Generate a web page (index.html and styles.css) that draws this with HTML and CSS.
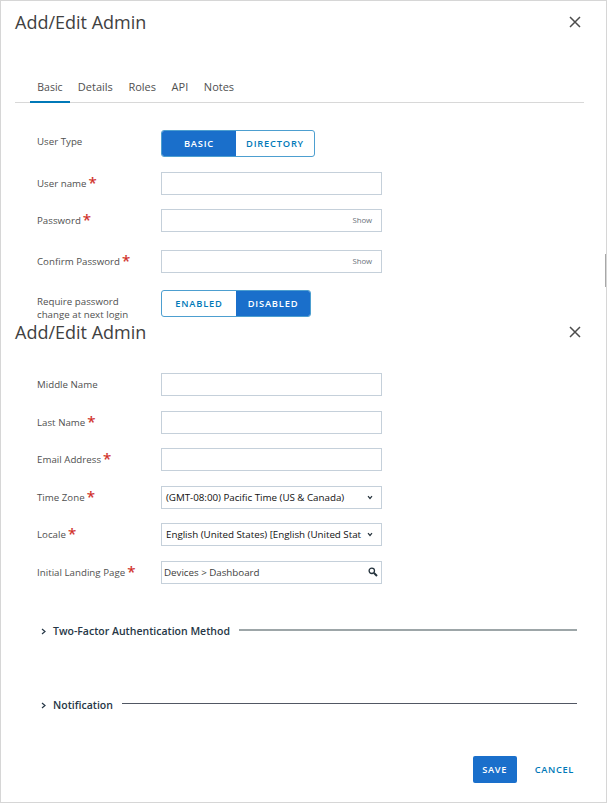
FILE: index.html
```html
<!DOCTYPE html>
<html lang="en">
<head>
<meta charset="utf-8">
<title>Add/Edit Admin</title>
<link rel="stylesheet" href="styles.css">
</head>
<body>
<main class="dialog">
  <section class="panel panel-top">
    <header class="head">
      <h1 class="title">Add/Edit Admin</h1>
      <svg class="close" viewBox="0 0 12 12"><path d="M1 1L11 11M11 1L1 11"/></svg>
    </header>
    <nav class="tabs">
      <a class="tab active"><span>Basic</span></a><a class="tab"><span>Details</span></a><a class="tab"><span>Roles</span></a><a class="tab"><span>API</span></a><a class="tab"><span>Notes</span></a>
    </nav>
    <div class="row row-toggle"><div class="label label-type"><span>User Type</span></div>
      <div class="toggle"><span class="opt on first">BASIC</span><span class="opt wide">DIRECTORY</span></div></div>
    <div class="row row-user"><div class="label"><span>User name</span><b>*</b></div><div class="field"></div></div>
    <div class="row row-pass"><div class="label"><span>Password</span><b>*</b></div><div class="field"><span class="show">Show</span></div></div>
    <div class="row row-confirm"><div class="label"><span>Confirm Password</span><b>*</b></div><div class="field"><span class="show">Show</span></div></div>
    <div class="row row-require"><div class="label label-two"><span>Require password<br>change at next login</span></div>
      <div class="toggle"><span class="opt first">ENABLED</span><span class="opt on">DISABLED</span></div></div>
  </section>
  <section class="panel panel-bottom">
    <header class="head">
      <h1 class="title">Add/Edit Admin</h1>
      <svg class="close" viewBox="0 0 12 12"><path d="M1 1L11 11M11 1L1 11"/></svg>
    </header>
    <div class="fields">
      <div class="row"><div class="label"><span>Middle Name</span></div><div class="field"></div></div>
      <div class="row"><div class="label"><span>Last Name</span><b>*</b></div><div class="field"></div></div>
      <div class="row"><div class="label"><span>Email Address</span><b>*</b></div><div class="field"></div></div>
      <div class="row"><div class="label"><span>Time Zone</span><b>*</b></div><div class="field select"><span class="value zone">(GMT-08:00) Pacific Time (US &amp; Canada)</span><svg class="chev" viewBox="0 0 6 5"><path d="M1 1.2L3 3.5L5 1.2"/></svg></div></div>
      <div class="row"><div class="label"><span>Locale</span><b>*</b></div><div class="field select"><span class="value locale">English (United States) [English (United Stat</span><svg class="chev" viewBox="0 0 6 5"><path d="M1 1.2L3 3.5L5 1.2"/></svg></div></div>
      <div class="row"><div class="label"><span>Initial Landing Page</span><b>*</b></div><div class="field lookup"><span class="value page">Devices &gt; Dashboard</span><svg class="search" viewBox="0 0 10 10"><circle cx="3.8" cy="3.8" r="2.7"/><path d="M6 6L9 9"/></svg></div></div>
    </div>
    <div class="group"><svg class="arrow" viewBox="0 0 5 7"><path d="M1 1L4 3.5L1 6"/></svg><span class="group-name two-factor">Two-Factor Authentication Method</span><i class="rule soft"></i></div>
    <div class="group second"><svg class="arrow" viewBox="0 0 5 7"><path d="M1 1L4 3.5L1 6"/></svg><span class="group-name">Notification</span><i class="rule"></i></div>
    <footer class="actions"><span class="save">SAVE</span><span class="cancel">CANCEL</span></footer>
  </section>
  <div class="scroll-thumb"></div>
</main>
</body>
</html>
```
FILE: styles.css
```css
* { box-sizing: border-box; }
body { margin: 0; background: #fff; font-family: "Open Sans", sans-serif; font-size: 10px; color: #505050; }
.dialog { position: relative; width: 607px; height: 803px; border: 1px solid #d6d6d6; overflow: hidden; }
.panel-top { height: 309px; }
.head { display: flex; justify-content: space-between; align-items: center; height: 42px; padding: 0 25.5px 0 14px; }
.panel-bottom .head { padding-top: 1px; }
.title { margin: 0; font-size: 18px; font-weight: 400; letter-spacing: 0; color: #414141; line-height: 24px; }
.close { width: 12px; height: 12px; fill: none; stroke: #4c4c4c; stroke-width: 1.5; }
.tabs { display: flex; height: 29px; margin: 31px 22px 0 14px; padding-left: 15px; border-bottom: 1px solid #d8d8d8; font-size: 11px; line-height: 26px; }
.tab { height: 29px; padding: 0 7.8px; white-space: nowrap; }
.tab.active { border-bottom: 2px solid #0079b8; font-size: 10.5px; padding-left: 7.3px; width: 40px; }
.row { display: flex; align-items: flex-start; height: 22.5px; margin: 15px 0 0 36px; }
.label { display: flex; flex: none; width: 124px; height: 23px; align-items: center; font-size: 9.7px; letter-spacing: .02px; line-height: 13px; white-space: nowrap; }
.label b { font-size: 15px; line-height: 10px; height: 13px; margin-left: 2px; font-weight: 400; color: #d02a1e; -webkit-text-stroke: .2px #d02a1e; }
.field { display: flex; flex: none; align-items: center; width: 221px; height: 23px; border: 1px solid #c5d0da; }
.row-toggle { margin-top: 27px; height: 27px; }
.row-pass { margin-top: 14.5px; }
.row-confirm { margin-top: 18.5px; }
.row-require { margin-top: 17.5px; height: 27px; }
.label-two { height: 35px; }
.toggle { display: flex; height: 27px; border: 1px solid #4d9fd0; border-radius: 3px; overflow: hidden; font-size: 9.3px; font-weight: 600; letter-spacing: .8px; color: #0079b8; }
.opt { display: flex; align-items: center; justify-content: center; width: 74px; }
.opt.wide { width: 78px; }
.on { background: #1a6fcb; color: #fff; }
.show { margin-left: auto; margin-right: 9px; font-size: 7.8px; line-height: 10px; padding-bottom: 1px; letter-spacing: -.1px; color: #69727a; }
.fields { padding-top: 6px; }
.value { color: #111; white-space: nowrap; font-size: 9.8px; letter-spacing: -.03px; }
.select .value { width: 196px; margin-left: 4px; }
.lookup .value { margin-left: 2px; color: #404040; }
.chev { width: 6px; height: 5px; margin-left: 5px; fill: none; stroke: #26333d; stroke-width: 1.2; }
.search { width: 10px; height: 10px; margin-left: auto; margin-right: 3px; fill: none; stroke: #25333d; stroke-width: 1.3; }
.search path { stroke-width: 2; }
.group { display: flex; align-items: center; height: 20px; margin: 38px 29px 0 40px; color: #263746; }
.group.second { margin-top: 54px; }
.arrow { width: 5px; height: 7px; flex: none; fill: none; stroke: #263746; stroke-width: 1.2; }
.group-name { margin-left: 7px; padding-bottom: 1px; font-size: 10.5px; font-weight: 600; white-space: nowrap; }
.rule { flex: 1; height: 1px; margin: 0 0 3px 9px; background: #515763; }
.rule.soft { height: 2px; margin-bottom: 2px; background: #9da6a8; }
.actions { display: flex; justify-content: flex-end; margin: 41px 32px 0 0; font-size: 9.3px; font-weight: 600; letter-spacing: .65px; }
.save { display: flex; align-items: center; justify-content: center; width: 44px; height: 27px; border-radius: 2px; background: #1a6fcb; color: #fff; }
.cancel { margin-left: 18px; line-height: 28px; height: 27px; color: #0079b8; }
.scroll-thumb { position: absolute; right: -1px; top: 253px; width: 2px; height: 33px; background: #a8a8a8; }
```
